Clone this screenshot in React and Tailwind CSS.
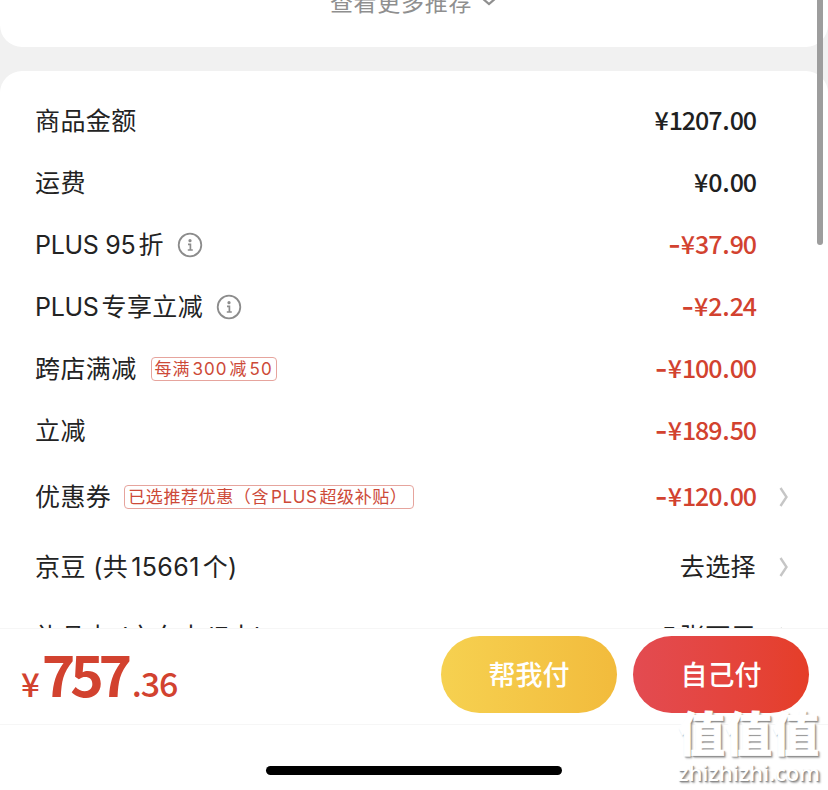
import React from 'react';
import clsx from 'clsx';

// labels are split where Latin text meets Chinese, so each part gets its own gap
const rows = [
  { label: ['商品金额'], price: '¥1207.00' },
  { label: ['运费'], price: '¥0.00' },
  { label: ['PLUS 95', '折'], info: true, price: '¥37.90', discount: true },
  { label: ['PLUS', '专享立减'], info: true, price: '¥2.24', discount: true },
  { label: ['跨店满减'], tag: ['每满', '300', '减', '50'], tagClass: 'ml-[14px] w-[126px] tracking-[1px]', price: '¥100.00', discount: true },
  { label: ['立减'], price: '¥189.50', discount: true },
  {
    label: ['优惠券'],
    tag: ['已选推荐优惠（含', 'PLUS', '超级补贴）'],
    tagClass: 'ml-[13px] w-[290px] tracking-[0.6px]',
    price: '¥120.00',
    discount: true,
    arrow: true,
    height: 'h-[70px]',
  },
  { label: ['京豆 (共', '15661', '个)'], action: ['去选择'], arrow: true, height: 'h-[70px]' },
  { label: ['礼品卡 (京东卡/E卡)'], action: ['5', '张可用'], arrow: true, height: 'h-[70px]' },
];

function InfoIcon() {
  return (
    <svg width="26" height="26" viewBox="0 0 26 26" fill="none" className="shrink-0">
      <circle cx="13" cy="13" r="11.3" stroke="#8c8c8c" strokeWidth="1.8" />
      <circle cx="13" cy="8.7" r="1.6" fill="#8c8c8c" />
      <path d="M11 12.4h2.4v5.4M10.8 18h5" stroke="#8c8c8c" strokeWidth="1.7" />
    </svg>
  );
}

function Arrow() {
  return (
    <svg width="10" height="20" viewBox="0 0 10 20" fill="none" className="shrink-0">
      <path d="M1.5 1L7.5 10L1.5 19" stroke="#c6c6c6" strokeWidth="2.4" />
    </svg>
  );
}

function Label({ parts }) {
  return (
    <span className="flex gap-[3px] text-[25px] leading-none tracking-[0.4px] whitespace-pre text-[#232323]">
      {parts.map((part) => (
        <span key={part} className={/^[A-Z]/.test(part) ? 'tracking-[-0.3px]' : undefined}>
          {part}
        </span>
      ))}
    </span>
  );
}

function Price({ value, discount }) {
  const [whole, cents] = value.split('.');
  return (
    <span
      className={clsx(
        "flex items-center pb-[3px] font-['Noto_Sans_CJK_SC',sans-serif] text-[25px] leading-none font-medium tracking-[-1.1px]",
        discount ? 'text-[#d2422f]' : 'text-[#202020]'
      )}
    >
      {discount && <span className="mr-px pt-[3px] font-['Inter',sans-serif] text-[28px]">-</span>}
      <span className="mr-px">{whole[0]}</span>
      <span>{whole.slice(1)}</span>
      <span className="mx-px">.</span>
      <span>{cents}</span>
    </span>
  );
}

function Row({ row }) {
  return (
    <div className={clsx('flex shrink-0 items-center justify-between pl-[35px]', row.height || 'h-[62px]')}>
      <div className="flex items-center">
        <Label parts={row.label} />
        {row.info && (
          <span className="ml-[13px]">
            <InfoIcon />
          </span>
        )}
        {row.tag && (
          <span
            className={clsx(
              'flex h-6 items-center gap-[2px] rounded-[4px] border border-[#e6a49d] pl-[3px] text-[17px] leading-none whitespace-nowrap text-[#cd4a38]',
              row.tagClass
            )}
          >
            {row.tag.map((part) => (
              <span key={part}>{part}</span>
            ))}
          </span>
        )}
      </div>
      <div className="flex items-center">
        {row.price ? <Price value={row.price} discount={row.discount} /> : <Label parts={row.action} />}
        <span className="flex w-[72px] pl-[23px]">{row.arrow && <Arrow />}</span>
      </div>
    </div>
  );
}

export default function App() {
  return (
    <div className="relative flex h-[790px] w-[828px] flex-col overflow-hidden bg-[#f1f1f1] font-['Inter','Noto_Sans_CJK_SC',sans-serif]">
      <div className="flex h-[47px] shrink-0 justify-center rounded-b-[22px] bg-white">
        <div className="-mt-[9px] flex h-6 items-center gap-2 text-[#8f8f8f]">
          <span className="text-[23px] leading-none tracking-[0.7px]">查看更多推荐</span>
          <svg width="18" height="12" viewBox="0 0 18 12" fill="none" className="-mt-[5px]">
            <path d="M2 3L9 9L16 3" stroke="currentColor" strokeWidth="2.2" />
          </svg>
        </div>
      </div>

      <main className="mt-6 flex h-[557px] shrink-0 flex-col overflow-hidden rounded-t-[22px] bg-white pt-[19px]">
        {rows.map((row) => (
          <Row key={row.label[0] + row.price} row={row} />
        ))}
      </main>

      {/* Pay bar */}
      <footer className="flex h-[97px] shrink-0 items-start justify-between border-y border-[#f6f6f6] bg-white pt-[7px] pr-[19px] pl-[21px]">
        <div className="flex items-baseline pt-[8px] font-['Noto_Sans_CJK_SC',sans-serif] leading-none text-[#d2422f]">
          <span className="mr-[2px] text-[33px] font-medium">¥</span>
          <span className="text-[57px] font-bold tracking-[-5.3px]">757</span>
          <span className="ml-[5px] text-[34px] font-medium tracking-[-1.2px]">.36</span>
        </div>
        <div className="flex gap-4 text-[27px] font-medium text-white">
          <button className="h-[77px] w-[176px] rounded-full bg-linear-to-r from-[#f6d150] to-[#f2bb3c] pt-1">帮我付</button>
          <button className="h-[77px] w-[176px] rounded-full bg-linear-to-r from-[#e34b51] to-[#e53e28] pt-1">自己付</button>
        </div>
      </footer>

      <div className="flex flex-1 justify-center bg-white pt-[41px]">
        <div className="h-[9px] w-[296px] rounded-full bg-black" />
      </div>

      {/* Scroll indicator */}
      <div className="absolute top-[-20px] right-[5px] h-[265px] w-[6px] rounded-full bg-[#9d9d9d]" />

      {/* Watermark */}
      <div className="absolute right-2 bottom-[5px] flex w-[142px] flex-col text-white [text-shadow:1px_1px_1px_#888,2px_2px_2px_#aaa]">
        <span className="text-[47px] leading-[50px] font-black [-webkit-text-stroke:0.6px_white]">值值值</span>
        <span className="font-['Open_Sans',sans-serif] text-[22px] leading-[26px] font-semibold tracking-[-0.1px]">zhizhizhi.com</span>
      </div>
    </div>
  );
}
